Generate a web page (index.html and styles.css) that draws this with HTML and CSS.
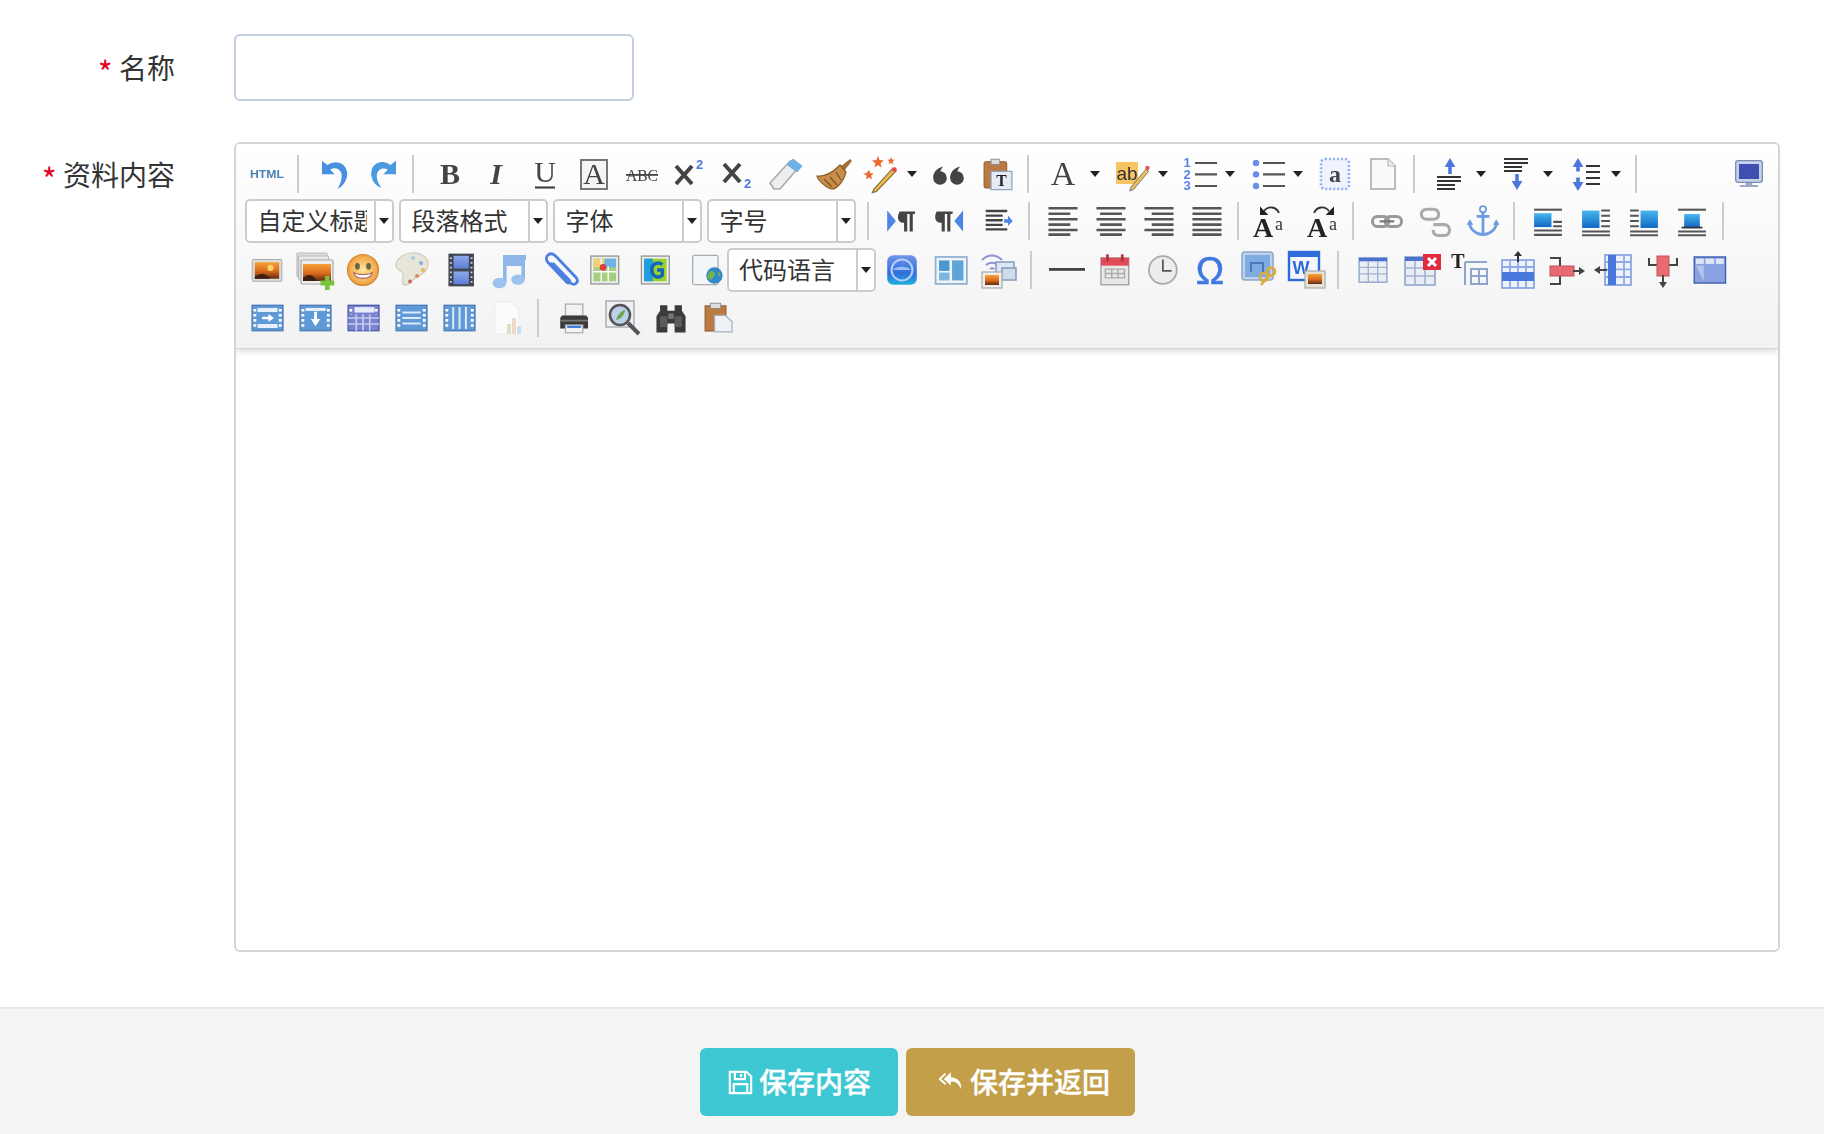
FILE: index.html
```html
<!DOCTYPE html>
<html lang="zh-CN">
<head>
<meta charset="utf-8">
<title>资料内容</title>
<link rel="stylesheet" href="styles.css">
</head>
<body>
<svg class="defs" aria-hidden="true">
<defs>
<linearGradient id="gSun" x1="0" y1="0" x2="0" y2="1"><stop offset="0" stop-color="#f7a23a"/><stop offset=".55" stop-color="#d9691c"/><stop offset="1" stop-color="#5a2a10"/></linearGradient>
<linearGradient id="gBlue" x1="0" y1="0" x2="0" y2="1"><stop offset="0" stop-color="#47b7ee"/><stop offset="1" stop-color="#1167c4"/></linearGradient>
<linearGradient id="gFilm" x1="0" y1="0" x2="0" y2="1"><stop offset="0" stop-color="#8fa8ea"/><stop offset="1" stop-color="#5c7fd6"/></linearGradient>
<radialGradient id="gFace"><stop offset="0" stop-color="#ffe9a0"/><stop offset="1" stop-color="#efa040"/></radialGradient>
<linearGradient id="gCyan" x1="0" y1="0" x2="0" y2="1"><stop offset="0" stop-color="#6f95e8"/><stop offset=".6" stop-color="#2f6fdc"/><stop offset="1" stop-color="#1fb0dc"/></linearGradient>

<symbol id="i-html" viewBox="0 0 20 20"><text x="10" y="12" class="t-html" textLength="17" lengthAdjust="spacingAndGlyphs">HTML</text></symbol>
<symbol id="i-undo" viewBox="0 0 20 20"><path d="M3.5 3.5v6.6h6.3L7.6 7.8c2.4-1.4 5-.4 5.6 2 .5 2.300-.4 5-1.900 7.700 3.300-1.700 5.300-5.300 4.700-8.700C15.300 4.600 10.500 2.500 6.200 5.500z" fill="#4a90e0"/></symbol>
<symbol id="i-redo" viewBox="0 0 20 20"><path d="M16.500 3.200v6.900h-6.300l2.200-2.300C10.200 6.500 7.600 7.500 7 10c-.5 2.300.6 4.900 2.200 6.900-3.300-1.100-5.700-4.700-5-8.300C5 4.300 9.600 2.500 13.800 5.500z" fill="#4a9ae0"/></symbol>
<symbol id="i-b" viewBox="0 0 20 20"><text x="10" y="15" class="t-serif t-bold">B</text></symbol>
<symbol id="i-i" viewBox="0 0 20 20"><text x="9" y="15" class="t-serif t-bold t-it">I</text></symbol>
<symbol id="i-u" viewBox="0 0 20 20"><text x="9.500" y="14" class="t-serif">U</text><rect x="4.500" y="16.200" width="10" height="1.100" fill="#444"/></symbol>
<symbol id="i-fa" viewBox="0 0 20 20"><rect x="3.500" y="3" width="13" height="14.500" fill="#f5f5f5" stroke="#777"/><text x="10" y="15" class="t-serif">A</text></symbol>
<symbol id="i-abc" viewBox="0 0 20 20"><text x="10" y="13.500" class="t-abc" textLength="16" lengthAdjust="spacingAndGlyphs">ABC</text><rect x="2" y="10" width="16" height=".9" fill="#444"/></symbol>
<symbol id="i-sup" viewBox="0 0 20 20"><path d="M3 6l8 9M11 6l-8 9" stroke="#444" stroke-width="2" fill="none"/><text x="13" y="7.500" class="t-idx">2</text></symbol>
<symbol id="i-sub" viewBox="0 0 20 20"><path d="M3 5l8 9M11 5l-8 9" stroke="#444" stroke-width="2" fill="none"/><text x="13" y="17" class="t-idx">2</text></symbol>
<symbol id="i-eraser" viewBox="0 0 20 20"><path d="M2 14.500L12 3.500l4 3.500L7 17.500H4z" fill="#eee" stroke="#aaa" stroke-width=".8"/><path d="M10.500 5.200L13.500 2.500l4.500 3.500-2.500 3z" fill="#69b2ea" stroke="#7fa8d0" stroke-width=".5"/></symbol>
<symbol id="i-brush" viewBox="0 0 20 20"><path d="M13 6.500L18 2.500l1 1-4 5z" fill="#a0703a"/><path d="M13 5.500l3 3.500c-1 5-5 8.500-7 8.500-2 0-7-4-7.500-6.500 3 .5 8-1.500 11.500-5.500z" fill="#c98f4a" stroke="#8a5a20" stroke-width=".6"/><path d="M5 12.500l4 4M8 11.500l3.500 4M11 9l2.500 4" stroke="#7d5020" stroke-width=".6"/></symbol>
<symbol id="i-wand" viewBox="0 0 20 20"><path d="M6 17.500l-.8 1.800 2-.6L17 8.500l-1.500-1.500z" fill="#f1bd4d" stroke="#8a7040" stroke-width=".6"/><circle cx="16.200" cy="7.800" r="1.200" fill="#e8494a"/><path d="M8 1l.8 2 2.200.2-1.700 1.400.5 2.200L8 5.600l-1.800 1.200.5-2.200L5 3.200 7.200 3zM14.500 1.500l.5 1.300 1.400.1-1.100.9.400 1.400-1.200-.8-1.200.8.400-1.400-1.100-.9 1.400-.1zM3.500 8l.7 1.600 1.700.2-1.300 1.100.4 1.700-1.500-.9-1.500.9.400-1.700L.5 9.800l1.700-.2z" fill="#ea6a30"/></symbol>
<symbol id="i-quote" viewBox="1 0 20 20"><circle cx="6" cy="12" r="3.400" fill="#444"/><path d="M2.600 12c0-3 2-5 5-5.700-1.200 1.300-1.700 2.700-1.700 4z" fill="#444"/><circle cx="14.500" cy="12" r="3.400" fill="#444"/><path d="M11.100 12c0-3 2-5 5-5.700-1.200 1.300-1.700 2.700-1.700 4z" fill="#444"/></symbol>
<symbol id="i-paste" viewBox="-1 -1.500 23 23"><rect x="2.500" y="3" width="13" height="15" rx="1" fill="#bb7a42" stroke="#8e5c34" stroke-width=".6"/><rect x="6.500" y="1.500" width="5" height="3" fill="#ddd" stroke="#888" stroke-width=".5"/><rect x="6.500" y="8.500" width="12" height="10.500" fill="#e6ecf6" stroke="#8fa0bf" stroke-width=".7"/><text x="12.500" y="17" class="t-tt">T</text></symbol>
<symbol id="i-fc" viewBox="0 0 20 20"><text x="9" y="15.500" class="t-serif t-a">A</text></symbol>
<symbol id="i-hl" viewBox="0 0 20 20"><rect x="1.500" y="4" width="11" height="11" fill="#f7c463"/><text x="7" y="13" class="t-ab">ab</text><path d="M9 16.500l-.6 2 1.900-.8 7.500-9-1.300-1.100z" fill="#eec05a" stroke="#777" stroke-width=".5"/><circle cx="17.200" cy="7" r="1.100" fill="#e25a5a"/></symbol>
<symbol id="i-ol" viewBox="0 0 20 20"><text x="3.500" y="6.500" class="t-num">1</text><text x="3.500" y="12.500" class="t-num">2</text><text x="3.500" y="18.200" class="t-num">3</text><path d="M7.500 4.500h11M7.500 10.200h11M7.500 16h11" stroke="#555" stroke-width="1.100"/></symbol>
<symbol id="i-ul" viewBox="0 0 20 20"><circle cx="4" cy="4.500" r="1.600" fill="#6a8fe6"/><circle cx="4" cy="10.200" r="1.600" fill="#6a8fe6"/><circle cx="4" cy="16" r="1.600" fill="#6a8fe6"/><path d="M7.500 4.500h11M7.500 10.200h11M7.500 16h11" stroke="#555" stroke-width="1.100"/></symbol>
<symbol id="i-dot" viewBox="0 0 20 20"><rect x="3" y="2.500" width="14" height="15" rx="2" fill="#eef3fd" stroke="#8fb0ee" stroke-width="1.300" stroke-dasharray="1 1"/><text x="10" y="14" class="t-dota">a</text></symbol>
<symbol id="i-page" viewBox="0 0 20 20"><path d="M4 2.500h8.500l3.500 3.500v11.500H4z" fill="#fafafa" stroke="#bbb"/><path d="M12.500 2.500V6H16" fill="#eee" stroke="#bbb" stroke-width=".6"/></symbol>
<symbol id="i-rt" viewBox="0 0 20 20"><path d="M9.500 2L6.800 6.500h1.800V10h1.800V6.500h1.800z" fill="#4c78dc"/><path d="M3 11.500h12M3 13.500h12M3 15.500h9M3 17.500h9" stroke="#333" stroke-width="1.100"/></symbol>
<symbol id="i-rb" viewBox="0 0 20 20"><path d="M3 2.500h12M3 4.500h12M3 6.500h9M3 8.500h9" stroke="#333" stroke-width="1.100"/><path d="M9.500 18L6.800 13.500h1.800V10h1.800v3.500h1.800z" fill="#4c78dc"/></symbol>
<symbol id="i-lh" viewBox="0 0 20 20"><path d="M6 2L3.300 6.500h1.800v2.300h1.800V6.500h1.800zM6 18.500L3.300 14h1.800v-2.300h1.800V14h1.800z" fill="#4c78dc"/><path d="M10 6h7M10 9h7M10 12h7M10 15h7" stroke="#333" stroke-width="1.100"/></symbol>
<symbol id="i-full" viewBox="-2 -2 24 24"><rect x="2" y="2" width="16" height="13" rx="1.500" fill="#c7d2ea" stroke="#7d8eb5" stroke-width=".8"/><rect x="4" y="4" width="12" height="9" fill="#3f4fb0"/><path d="M8 15.500h4v1H8zM4.500 16.800h11v.9h-11z" fill="#7d8eb5"/></symbol>

<symbol id="i-ltr" viewBox="-1 -1.500 23 23"><path d="M2 4l5 6-5 6z" fill="#4c85e6"/><path d="M9 4.500h9v1.500h-1.300v10h-1.800V6h-1.400v10h-1.800V11c-2.400 0-3.500-1.400-3.500-3.200S9.300 4.500 9 4.500z" fill="#444"/></symbol>
<symbol id="i-rtl" viewBox="-1 -1.500 23 23"><path d="M18 4l-5 6 5 6z" fill="#4c85e6"/><path d="M3 4.500h9v1.500h-1.300v10H8.900V6H7.500v10H5.700V11C3.300 11 2 9.600 2 7.800S2.700 4.500 3 4.500z" fill="#444"/></symbol>
<symbol id="i-ind" viewBox="-3 -3 26 26"><path d="M2 3.500h14M2 6.500h11M2 9.500h11M2 12.500h11M2 15.500h14" stroke="#444" stroke-width="1.500"/><path d="M14 8.800h2.500V6.500l3 3.500-3 3.300v-2.200H14z" fill="#4c85e6"/></symbol>
<symbol id="i-al" viewBox="-1 -1 22 22"><path d="M2 3.500h16M2 6.500h12M2 9.500h16M2 12.500h12M2 15.500h16M2 18h12" stroke="#555" stroke-width="1.400" transform="translate(0 -.5)"/></symbol>
<symbol id="i-ac" viewBox="-1 -1 22 22"><path d="M2 3.500h16M4 6.500h12M2 9.500h16M4 12.500h12M2 15.500h16M4 18h12" stroke="#555" stroke-width="1.400" transform="translate(0 -.5)"/></symbol>
<symbol id="i-ar" viewBox="-1 -1 22 22"><path d="M2 3.500h16M6 6.500h12M2 9.500h16M6 12.500h12M2 15.500h16M6 18h12" stroke="#555" stroke-width="1.400" transform="translate(0 -.5)"/></symbol>
<symbol id="i-aj" viewBox="-1 -1 22 22"><path d="M2 3.500h16M2 6.500h16M2 9.500h16M2 12.500h16M2 15.500h16M2 18h16" stroke="#555" stroke-width="1.400" transform="translate(0 -.5)"/></symbol>
<symbol id="i-up" viewBox="-1.500 0 20 20"><text x="6" y="18" class="t-aa">A</text><text x="14" y="14.500" class="t-aa2">a</text><path d="M14 6C12.500 2.500 8.500 2.500 6.500 5" stroke="#333" stroke-width=".9" fill="none"/><path d="M4.500 2.800v4.200h4.200z" fill="#222"/></symbol>
<symbol id="i-low" viewBox="-1.500 0 20 20"><text x="6" y="18" class="t-aa">A</text><text x="14" y="14.500" class="t-aa2">a</text><path d="M4.500 6C6 2.500 10 2.500 12 5" stroke="#333" stroke-width=".9" fill="none"/><path d="M14.500 2.800v4.200h-4.200z" fill="#222"/></symbol>
<symbol id="i-link" viewBox="-1 -1 22 22"><rect x="2" y="7.500" width="9" height="5.500" rx="2.700" fill="none" stroke="#999" stroke-width="1.600"/><rect x="9" y="7.500" width="9" height="5.500" rx="2.700" fill="none" stroke="#999" stroke-width="1.600"/><path d="M6 10.200h8" stroke="#777" stroke-width="1.200"/></symbol>
<symbol id="i-unlink" viewBox="-1 -1 22 22"><path d="M9 9H5.500C3.500 9 2.500 7.800 2.500 6.300S3.500 3.500 5.500 3.500H9c2 0 3 1.200 3 2.800 0 1.700-1 2.700-3 2.700M9 12h6c2 0 3 1.400 3 3s-1 3-3 3h-3c-2 0-3-1.200-3-3" fill="none" stroke="#aaa" stroke-width="1.700"/></symbol>
<symbol id="i-anchor" viewBox="-1 -1 22 22"><circle cx="10" cy="3.500" r="1.700" fill="none" stroke="#6c9be0" stroke-width="1"/><path d="M10 5v12.500M6.500 7.500h7M2.500 10.500c0 4 4 7 7.500 7s7.500-3 7.500-7" fill="none" stroke="#6c9be0" stroke-width="1.500"/><path d="M1 12l1.800-3 1.800 3zM15.500 12l1.800-3 1.800 3z" fill="#6c9be0"/></symbol>
<symbol id="i-il" viewBox="-1.500 -1.500 23 23"><path d="M2 3.500h16" stroke="#555" stroke-width="1.200"/><rect x="2" y="5.500" width="10" height="8" fill="url(#gBlue)"/><path d="M13 10.500h5M13 13h5M2 15.500h16M2 18h16" stroke="#555" stroke-width="1.200"/></symbol>
<symbol id="i-ir" viewBox="-1.500 -1.500 23 23"><rect x="2" y="4" width="10" height="10" fill="url(#gBlue)"/><path d="M13 4h5M13 7h5M13 10h5M13 13h5M2 16h16M2 18.200h16" stroke="#555" stroke-width="1.200"/></symbol>
<symbol id="i-in" viewBox="-1.500 -1.500 23 23"><rect x="8" y="4" width="10" height="10" fill="url(#gBlue)"/><path d="M2 4h5M2 7h5M2 10h5M2 13h5M2 16h16M2 18.200h16" stroke="#555" stroke-width="1.200"/></symbol>
<symbol id="i-ic" viewBox="-1.500 -1.500 23 23"><path d="M2 3.500h16" stroke="#555" stroke-width="1.200"/><rect x="5.500" y="6" width="9" height="7.500" fill="url(#gBlue)"/><path d="M4 13.800h12" stroke="#333" stroke-width="1"/><path d="M2 16h16M2 18.200h16" stroke="#555" stroke-width="1.200"/></symbol>

<symbol id="i-img" viewBox="-1.500 -1.500 23 23"><rect x="1.500" y="4" width="17" height="12.500" rx=".8" fill="#ddd" stroke="#aaa" stroke-width=".6"/><rect x="3" y="5.500" width="14" height="9.500" fill="url(#gSun)"/><circle cx="12" cy="8.800" r="1.800" fill="#fad26a"/><path d="M3 14c3-2.500 6-2.500 9 1H3z" fill="#3d2010"/></symbol>
<symbol id="i-imgs" viewBox="0 0 20 20"><rect x="1" y="1.500" width="15" height="12" rx=".6" fill="#ddd" stroke="#bbb" stroke-width=".6"/><rect x="1.800" y="3" width="15" height="12" rx=".6" fill="#e8e8e8" stroke="#bbb" stroke-width=".6"/><rect x="3" y="5" width="16" height="12" rx=".6" fill="#eee" stroke="#aaa" stroke-width=".6"/><rect x="4" y="7" width="14" height="8.500" fill="url(#gSun)"/><path d="M4 14c3-2.500 5-2 7 1.500H4z" fill="#3d2010"/><path d="M15 13h2.300v2.300h2.300v2.400h-2.300V20H15v-2.300h-2.300v-2.400H15z" fill="#7cc13a"/></symbol>
<symbol id="i-emo" viewBox="-.8 -.8 21.600 21.600"><circle cx="10" cy="10" r="8.300" fill="url(#gFace)" stroke="#d98c35" stroke-width=".8"/><ellipse cx="7" cy="8" rx="1.300" ry="1.800" fill="#664"/><ellipse cx="13" cy="8" rx="1.300" ry="1.800" fill="#664"/><path d="M5 11.500c2 1.200 8 1.200 10 0-1 4-9 4-10 0z" fill="#fff" stroke="#a66" stroke-width=".6"/></symbol>
<symbol id="i-pal" viewBox="0 0 20 20"><path d="M3 9c-2-3 2-7 7-7.500 5-.5 9 2.500 8.500 6-.5 4-4 5-7 7-1.500 1-2 3-4 3s-2-2-1.500-4C6.500 10.500 4.500 11 3 9z" fill="#e7e4da" stroke="#cfcbbd" stroke-width=".6"/><circle cx="15" cy="6.500" r="1" fill="#7cb2e6"/><circle cx="16" cy="10" r="1" fill="#e8b94c"/><circle cx="13" cy="13" r="1" fill="#d98860"/><circle cx="9.500" cy="15.800" r="1" fill="#c96a5a"/><circle cx="11" cy="4" r="1" fill="#a9cbe8"/></symbol>
<symbol id="i-film" viewBox="-2.200 -1 22 22"><rect x="3" y="1" width="14" height="18" fill="#3f4652"/><rect x="5.800" y="2.200" width="8.400" height="7" fill="url(#gFilm)"/><rect x="5.800" y="10.800" width="8.400" height="7" fill="url(#gFilm)"/><path d="M4.300 3v14M15.700 3v14" stroke="#cfd6e0" stroke-width="1" stroke-dasharray="1 1.600"/></symbol>
<symbol id="i-mus" viewBox="-1 0 20 20"><path d="M7 4h11v10.500h-1.800V8H8.800v8.500H7z" fill="#8fb6e8"/><path d="M7 2.500h11.500V5H7z" fill="#8fb6e8"/><ellipse cx="5.200" cy="16.500" rx="3.400" ry="2.600" fill="#9cc2ee"/><ellipse cx="14.500" cy="14.800" rx="3.400" ry="2.600" fill="#9cc2ee"/></symbol>
<symbol id="i-clip" viewBox="-2.800 0 20 20"><path d="M5 6.500l10 10c2.500 2 4.500-1 2.500-3L7.500 3C5 .5 1.500 3 3.500 6l9.500 10c1 1 2 .2 1.300-1L6 6.500" fill="none" stroke="#4c7fe0" stroke-width="1.400"/></symbol>
<symbol id="i-map" viewBox="-2.500 -1.500 23 23"><rect x="2" y="2" width="16" height="16" fill="#eee" stroke="#999" stroke-width=".8"/><rect x="3.500" y="3.500" width="13" height="13" fill="#a5cf80"/><path d="M3.500 3.500h6v5h-6z" fill="#f0d27a"/><path d="M10 3.500h6.500v5H10z" fill="#6fb4e6"/><path d="M8 3.500v13M3.500 11h13M12 8v8.500" stroke="#fff" stroke-width=".8"/><circle cx="9" cy="8.500" r="1.900" fill="#e03c3c"/></symbol>
<symbol id="i-gmap" viewBox="-4 -1.500 23 23"><rect x="2" y="2" width="16" height="16" fill="#eee" stroke="#999" stroke-width=".8"/><rect x="3.500" y="3.500" width="13" height="13" fill="#9ad22c"/><path d="M3.500 3.500h5v13h-5z" fill="#1f9fe0"/><path d="M14 7c-2-2-6-1-6 3s4 5 6 3v-3h-3" fill="none" stroke="#1565b8" stroke-width="2"/></symbol>
<symbol id="i-web" viewBox="-5.500 -1 22 22"><rect x="2" y="2" width="14" height="16" rx="1" fill="#f2f5fa" stroke="#aaa" stroke-width=".7"/><circle cx="14" cy="13" r="4.500" fill="#2f88c9"/><path d="M12 10.500c1.500 0 3 1 2 2.500s-1.500 3-3 2-1-3 1-4.500zM16 10.500l1.500 2-1.500 1z" fill="#73b54a"/></symbol>
<symbol id="i-gad" viewBox="-1.500 -1.500 23 23"><rect x="1.500" y="1.500" width="17" height="17" rx="3.500" fill="url(#gCyan)"/><ellipse cx="10" cy="10" rx="6" ry="6" fill="none" stroke="#b9cff5" stroke-width="1.200"/><path d="M5 10c1.500-2.500 8.500-2.500 10 0" fill="#9cc0f2"/></symbol>
<symbol id="i-tpl" viewBox="-2.200 -1.500 23 23"><rect x="1" y="2.500" width="18" height="15.500" fill="#eef3f8" stroke="#8fb0cf"/><rect x="3" y="4.500" width="6" height="6" fill="#4b97d2"/><rect x="3" y="11.500" width="6" height="4.500" fill="#7cb5df"/><rect x="10.500" y="4.500" width="6.500" height="11.500" fill="#5ea4d8"/></symbol>
<symbol id="i-bg" viewBox="0 0 20 20"><path d="M2 5C5 2 9 2 12 5M4 7.500c2-1.500 4-1.500 6 0M6 9.500c.7-.5 1.500-.5 2.200 0" fill="none" stroke="#8e90d8" stroke-width="1"/><rect x="9" y="6" width="9" height="8" fill="#dde6f2" stroke="#8aa0c0" stroke-width=".8"/><rect x="12" y="9" width="7" height="6" fill="#cfdcee" stroke="#8aa0c0" stroke-width=".8"/><rect x="2" y="11" width="10" height="8" fill="#eee" stroke="#aaa" stroke-width=".6"/><rect x="3.500" y="12.500" width="7" height="5" fill="url(#gSun)"/></symbol>
<symbol id="i-hr" viewBox="-.5 0 20 20"><rect x="1" y="9" width="18" height="1.400" fill="#444"/></symbol>
<symbol id="i-cal" viewBox="-2 -1.500 23 23"><rect x="2" y="3" width="16" height="15.500" fill="#e8e8e8" stroke="#999" stroke-width=".7"/><rect x="2" y="3" width="16" height="4.500" fill="#e24a5a"/><rect x="5" y="1" width="1.500" height="4" fill="#a33"/><rect x="13.500" y="1" width="1.500" height="4" fill="#a33"/><path d="M4.500 9.500h11v5h-11zM8.200 9.500v5M11.800 9.500v5M4.500 12h11" fill="none" stroke="#aaa" stroke-width=".8"/></symbol>
<symbol id="i-clk" viewBox="-2 -1.500 23 23"><circle cx="10" cy="10" r="8" fill="#ececec" stroke="#aaa" stroke-width="1"/><path d="M10 4v6.500h5" fill="none" stroke="#555" stroke-width="1"/></symbol>
<symbol id="i-om" viewBox="0 0 20 20"><text x="10" y="17" class="t-om">Ω</text></symbol>
<symbol id="i-scr" viewBox="-.5 0 20 20"><rect x="1.500" y="1" width="15.500" height="14" rx="1.500" fill="#bfd2ee" stroke="#8fa8cc" stroke-width=".8"/><rect x="3" y="2.500" width="12.500" height="11" fill="#7fabe0"/><path d="M6 11V6.500h6V11" fill="none" stroke="#4a78b8" stroke-width="1"/><circle cx="12.500" cy="13.500" r="2" fill="none" stroke="#d9ac42" stroke-width="1.300"/><circle cx="16" cy="10.800" r="2" fill="none" stroke="#d9ac42" stroke-width="1.300"/><path d="M11 17.500l4-5" stroke="#d9ac42" stroke-width="1.300"/></symbol>
<symbol id="i-wrd" viewBox="-.5 0 20 20"><rect x="1" y="1" width="15" height="14" fill="#f4f7fd" stroke="#2f6bd6" stroke-width="1.200"/><rect x="1" y="1" width="15" height="2.500" fill="#2f6bd6"/><text x="7" y="12" class="t-w">W</text><rect x="9" y="10.500" width="10" height="8.500" fill="#e6e2d6" stroke="#aaa" stroke-width=".6"/><rect x="10.500" y="12" width="7" height="5" fill="url(#gSun)"/></symbol>
<symbol id="i-tb" viewBox="-2 -1.500 23 23"><rect x="1.500" y="3" width="16" height="14" fill="#e8edf6" stroke="#8ea5cf" stroke-width=".8"/><rect x="1.500" y="3" width="16" height="2" fill="#4c72cf"/><path d="M1.500 8.500h16M1.500 12.200h16M6.800 5v12M12.200 5v12" stroke="#a2b1cc" stroke-width=".8"/></symbol>
<symbol id="i-tbd" viewBox="-1 0 20 20"><rect x="1" y="3.500" width="15" height="14" fill="#e8edf6" stroke="#8ea5cf" stroke-width=".8"/><rect x="1" y="3.500" width="15" height="2" fill="#4c72cf"/><path d="M1 9h15M1 13h15M6 5.500v12M11 5.500v12" stroke="#a2b1cc" stroke-width=".8"/><rect x="10" y="2" width="9" height="8" fill="#e22b3f"/><path d="M12.500 4l4 4M16.500 4l-4 4" stroke="#fff" stroke-width="1.500"/></symbol>
<symbol id="i-ttl" viewBox="0 0 20 20"><text x="4.500" y="9" class="t-ttl">T</text><path d="M8 6h11M8 6v11.500M11 9.500h8v7.500h-8zM11 13h8M15 9.500v7.500" fill="none" stroke="#8ea5cf" stroke-width="1"/></symbol>
<symbol id="i-trow" viewBox="-.5 0 20 20"><rect x="2" y="5" width="16" height="14" fill="#eef2fb" stroke="#7f9be0" stroke-width=".8"/><path d="M2 8.500h16M6 5v14M10 5v14M14 5v14" stroke="#93aae6" stroke-width=".9"/><rect x="2" y="11" width="16" height="4.500" fill="#4878dc"/><path d="M10 .5L8 3h1.500v3h1V3H12z" fill="#333"/></symbol>
<symbol id="i-tmg" viewBox="-1 0 20 20"><path d="M1.500 4h5v4M1.500 17h5v-4" fill="none" stroke="#444" stroke-width="1"/><rect x="1.500" y="8" width="12" height="5" fill="#ea6a72" stroke="#c05058" stroke-width=".5"/><path d="M13 10.500h4" stroke="#444" stroke-width="1"/><path d="M16 8.500l3 2-3 2z" fill="#444"/></symbol>
<symbol id="i-tcol" viewBox="0 0 20 20"><rect x="6" y="2.500" width="13" height="15" fill="#eef2fb" stroke="#7f9be0" stroke-width=".8"/><path d="M6 6h13M6 9.700h13M6 13.500h13M15.500 2.500v15" stroke="#93aae6" stroke-width=".9"/><rect x="7.500" y="2.500" width="4" height="15" fill="#4878dc"/><path d="M1 10h6" stroke="#444" stroke-width="1"/><path d="M3.500 8L.5 10l3 2z" fill="#444"/></symbol>
<symbol id="i-tsp" viewBox="-1 0 20 20"><path d="M3 4v3.500h4M17 4v3.500h-4" fill="none" stroke="#444" stroke-width="1"/><rect x="7" y="3" width="6" height="10" fill="#ea6a72" stroke="#c05058" stroke-width=".5"/><path d="M10 12.500v4" stroke="#444" stroke-width="1"/><path d="M8 16l2 3 2-3z" fill="#444"/></symbol>
<symbol id="i-tprop" viewBox="-2 -1.500 23 23"><rect x="1" y="2.500" width="18" height="15" fill="#8aa2e2" stroke="#3f5fb0" stroke-width=".8"/><rect x="2" y="3.500" width="4.500" height="3" fill="#dfe7f7"/><rect x="7.500" y="3.500" width="5" height="3" fill="#dfe7f7"/><rect x="13.500" y="3.500" width="4.500" height="3" fill="#dfe7f7"/><path d="M2 7.500h4.500v9" fill="#b6c6ea"/></symbol>
<symbol id="i-tf1" viewBox="-1.300 -1 22 22"><rect x="1.500" y="3" width="17" height="14" fill="#5f99d6" stroke="#4879b8" stroke-width=".7"/><path d="M3 5v10M17 5v10" stroke="#fff" stroke-width="1.600" stroke-dasharray="1.400 1.400"/><rect x="4.500" y="4.500" width="11" height="2.200" fill="#e8f1fb"/><rect x="4.500" y="13.300" width="11" height="2.200" fill="#e8f1fb"/><path d="M7 9.300h3.500V7.800l3 2.200-3 2.200v-1.500H7z" fill="#fff"/></symbol>
<symbol id="i-tf2" viewBox="-1.300 -1 22 22"><rect x="1.500" y="3" width="17" height="14" fill="#5f99d6" stroke="#4879b8" stroke-width=".7"/><path d="M3 5v10M17 5v10" stroke="#fff" stroke-width="1.600" stroke-dasharray="1.400 1.400"/><rect x="4.500" y="4.500" width="11" height="1.600" fill="#e8f1fb"/><path d="M9.200 6.500h1.600v4h1.800L10 14.500l-2.600-4h1.800z" fill="#fff"/></symbol>
<symbol id="i-tf3" viewBox="-1.300 -1 22 22"><rect x="1.500" y="3" width="17" height="14" fill="#7883cf" stroke="#4c58a8" stroke-width=".7"/><path d="M3 5v3M17 5v3" stroke="#fff" stroke-width="1.600" stroke-dasharray="1.400 1.400"/><rect x="5" y="4" width="11" height="3" fill="#e8ecfa"/><path d="M1.500 10h17M1.500 13.300h17M6 8v9M9.700 8v9M13.400 8v9" stroke="#c6cdef" stroke-width=".9"/></symbol>
<symbol id="i-tf4" viewBox="-1.300 -1 22 22"><rect x="1.500" y="3" width="17" height="14" fill="#5f99d6" stroke="#4879b8" stroke-width=".7"/><path d="M3 5v10M17 5v10" stroke="#fff" stroke-width="1.600" stroke-dasharray="1.400 1.400"/><path d="M5 7h10M5 10h10M5 13h10" stroke="#dfeafb" stroke-width="1.100"/></symbol>
<symbol id="i-tf5" viewBox="-1.300 -1 22 22"><rect x="1.500" y="3" width="17" height="14" fill="#5f99d6" stroke="#4879b8" stroke-width=".7"/><path d="M3 5v10M17 5v10" stroke="#fff" stroke-width="1.600" stroke-dasharray="1.400 1.400"/><path d="M6.500 4v12M10 4v12M13.500 4v12" stroke="#dfeafb" stroke-width="1.100"/></symbol>
<symbol id="i-chart" viewBox="0 0 20 20"><path d="M4 2h8l4 4v12H4z" fill="#fbfbfb" stroke="#eee" stroke-width=".6"/><rect x="10" y="13" width="2" height="5" fill="#d8e2c4"/><rect x="12.500" y="10" width="2" height="8" fill="#efd8c8"/><rect x="15" y="14" width="2" height="4" fill="#c8def0"/></symbol>
<symbol id="i-print" viewBox="-1 -1.500 23 23"><rect x="5" y="2" width="10" height="7" fill="#f2f2f2" stroke="#aaa" stroke-width=".7"/><path d="M3 8.500h14l1 1.500v6H2v-6z" fill="#3a3a3a"/><rect x="2" y="11" width="16" height="1" fill="#777"/><rect x="5" y="14" width="10" height="4.500" fill="#f2f2f2" stroke="#aaa" stroke-width=".7"/><rect x="6" y="14.500" width="8" height="1.200" fill="#3a78dc"/></symbol>
<symbol id="i-prev" viewBox="0 0 20 20"><rect x="1.500" y="1.500" width="14" height="13" fill="#eef0f4" stroke="#a8a8b0" stroke-width=".7"/><circle cx="8.500" cy="8.500" r="5" fill="#bcd0ea" stroke="#555" stroke-width="1.300"/><path d="M6.500 11c1-3 2.500-4.500 4.500-5-.2 2.500-2 4.500-4.500 5z" fill="#6aa84a"/><path d="M12.500 12.500l5.500 5.500" stroke="#555" stroke-width="2"/></symbol>
<symbol id="i-find" viewBox="-1 -1 22 22"><path d="M4 3h4v3h4V3h4v3l2 3v9h-6v-5H8v5H2V9l2-3z" fill="#3a3a3a"/><path d="M4 9h4v6H4zM12 9h4v6h-4z" fill="#5c5c5c"/><rect x="8.500" y="7.500" width="3" height="3" fill="#777"/></symbol>
<symbol id="i-psw" viewBox="-1 -1.500 23 23"><rect x="2.500" y="3" width="12" height="14.500" fill="#bb7a42" stroke="#8e5c34" stroke-width=".6"/><rect x="5.500" y="1.500" width="6" height="3" fill="#ddd" stroke="#888" stroke-width=".5"/><path d="M8 8.500h6l4 3.500v6H8z" fill="#eef1f6" stroke="#a8afbc" stroke-width=".7"/></symbol>
<symbol id="i-disk" viewBox="0 0 24 24"><path d="M2.500 2.500h14.800l4.200 4.200v14.800h-19z" fill="none" stroke="#fff" stroke-width="1.900"/><path d="M7 2.500v6.500h9V2.500M12.500 4.500v2.500M6 21.500v-8h12v8" fill="none" stroke="#fff" stroke-width="1.900"/></symbol>
<symbol id="i-back" viewBox="0 0 30 24"><path d="M8 2.500L1.500 8.500 8 14.500" fill="none" stroke="#fff" stroke-width="2.200"/><path d="M14 1L6 8.500l8 7.500v-4.500c5 0 9 2 11 8.500 2-7-2-12.500-11-13.500z" fill="#fff"/></symbol>
</defs>
</svg>

<main class="form">
  <div class="field">
    <label class="label"><span class="req">*</span> 名称</label>
    <input class="input" type="text">
  </div>
  <div class="field field-editor">
    <label class="label"><span class="req">*</span> 资料内容</label>
    <div class="editor">
      <div class="toolbar">
        <div class="row">
          <span class="b"><svg class="ic"><use href="#i-html"/></svg></span><i class="sep"></i>
          <span class="b"><svg class="ic"><use href="#i-undo"/></svg></span>
          <span class="b"><svg class="ic"><use href="#i-redo"/></svg></span><i class="sep"></i>
          <span class="b"><svg class="ic"><use href="#i-b"/></svg></span>
          <span class="b"><svg class="ic"><use href="#i-i"/></svg></span>
          <span class="b"><svg class="ic"><use href="#i-u"/></svg></span>
          <span class="b"><svg class="ic"><use href="#i-fa"/></svg></span>
          <span class="b"><svg class="ic"><use href="#i-abc"/></svg></span>
          <span class="b"><svg class="ic"><use href="#i-sup"/></svg></span>
          <span class="b"><svg class="ic"><use href="#i-sub"/></svg></span>
          <span class="b"><svg class="ic"><use href="#i-eraser"/></svg></span>
          <span class="b"><svg class="ic"><use href="#i-brush"/></svg></span>
          <span class="b"><svg class="ic"><use href="#i-wand"/></svg></span><i class="caret"></i>
          <span class="b"><svg class="ic"><use href="#i-quote"/></svg></span>
          <span class="b"><svg class="ic"><use href="#i-paste"/></svg></span><i class="sep"></i>
          <span class="b"><svg class="ic"><use href="#i-fc"/></svg></span><i class="caret"></i>
          <span class="b"><svg class="ic"><use href="#i-hl"/></svg></span><i class="caret"></i>
          <span class="b"><svg class="ic"><use href="#i-ol"/></svg></span><i class="caret"></i>
          <span class="b"><svg class="ic"><use href="#i-ul"/></svg></span><i class="caret"></i>
          <span class="b"><svg class="ic"><use href="#i-dot"/></svg></span>
          <span class="b"><svg class="ic"><use href="#i-page"/></svg></span><i class="sep"></i>
          <span class="b"><svg class="ic"><use href="#i-rt"/></svg></span><i class="caret"></i>
          <span class="b"><svg class="ic"><use href="#i-rb"/></svg></span><i class="caret"></i>
          <span class="b"><svg class="ic"><use href="#i-lh"/></svg></span><i class="caret"></i><i class="sep"></i>
          <span class="b push"><svg class="ic"><use href="#i-full"/></svg></span>
        </div>
        <div class="row">
          <span class="sel first"><span class="sel-text">自定义标题</span><span class="sel-arrow"><i class="caret-s"></i></span></span>
          <span class="sel"><span class="sel-text">段落格式</span><span class="sel-arrow"><i class="caret-s"></i></span></span>
          <span class="sel"><span class="sel-text">字体</span><span class="sel-arrow"><i class="caret-s"></i></span></span>
          <span class="sel"><span class="sel-text">字号</span><span class="sel-arrow"><i class="caret-s"></i></span></span><i class="sep tight"></i>
          <span class="b"><svg class="ic"><use href="#i-ltr"/></svg></span>
          <span class="b"><svg class="ic"><use href="#i-rtl"/></svg></span>
          <span class="b"><svg class="ic"><use href="#i-ind"/></svg></span><i class="sep tight"></i>
          <span class="b"><svg class="ic"><use href="#i-al"/></svg></span>
          <span class="b"><svg class="ic"><use href="#i-ac"/></svg></span>
          <span class="b"><svg class="ic"><use href="#i-ar"/></svg></span>
          <span class="b"><svg class="ic"><use href="#i-aj"/></svg></span><i class="sep tight"></i>
          <span class="b case-up"><svg class="ic"><use href="#i-up"/></svg></span>
          <span class="b"><svg class="ic"><use href="#i-low"/></svg></span><i class="sep tight"></i>
          <span class="b"><svg class="ic"><use href="#i-link"/></svg></span>
          <span class="b"><svg class="ic"><use href="#i-unlink"/></svg></span>
          <span class="b"><svg class="ic"><use href="#i-anchor"/></svg></span><i class="sep tight"></i>
          <span class="b"><svg class="ic"><use href="#i-il"/></svg></span>
          <span class="b"><svg class="ic"><use href="#i-ir"/></svg></span>
          <span class="b"><svg class="ic"><use href="#i-in"/></svg></span>
          <span class="b"><svg class="ic"><use href="#i-ic"/></svg></span><i class="sep tight"></i>
        </div>
        <div class="row">
          <span class="b"><svg class="ic"><use href="#i-img"/></svg></span>
          <span class="b"><svg class="ic"><use href="#i-imgs"/></svg></span>
          <span class="b"><svg class="ic"><use href="#i-emo"/></svg></span>
          <span class="b"><svg class="ic"><use href="#i-pal"/></svg></span>
          <span class="b"><svg class="ic"><use href="#i-film"/></svg></span>
          <span class="b"><svg class="ic"><use href="#i-mus"/></svg></span>
          <span class="b"><svg class="ic"><use href="#i-clip"/></svg></span>
          <span class="b"><svg class="ic"><use href="#i-map"/></svg></span>
          <span class="b"><svg class="ic"><use href="#i-gmap"/></svg></span>
          <span class="b"><svg class="ic"><use href="#i-web"/></svg></span>
          <span class="sel code"><span class="sel-text">代码语言</span><span class="sel-arrow"><i class="caret-s"></i></span></span>
          <span class="b"><svg class="ic"><use href="#i-gad"/></svg></span>
          <span class="b"><svg class="ic"><use href="#i-tpl"/></svg></span>
          <span class="b"><svg class="ic"><use href="#i-bg"/></svg></span><i class="sep wide"></i>
          <span class="b"><svg class="ic"><use href="#i-hr"/></svg></span>
          <span class="b"><svg class="ic"><use href="#i-cal"/></svg></span>
          <span class="b"><svg class="ic"><use href="#i-clk"/></svg></span>
          <span class="b"><svg class="ic"><use href="#i-om"/></svg></span>
          <span class="b"><svg class="ic"><use href="#i-scr"/></svg></span>
          <span class="b"><svg class="ic"><use href="#i-wrd"/></svg></span><i class="sep wide"></i>
          <span class="b"><svg class="ic"><use href="#i-tb"/></svg></span>
          <span class="b"><svg class="ic"><use href="#i-tbd"/></svg></span>
          <span class="b"><svg class="ic"><use href="#i-ttl"/></svg></span>
          <span class="b"><svg class="ic"><use href="#i-trow"/></svg></span>
          <span class="b"><svg class="ic"><use href="#i-tmg"/></svg></span>
          <span class="b"><svg class="ic"><use href="#i-tcol"/></svg></span>
          <span class="b"><svg class="ic"><use href="#i-tsp"/></svg></span>
          <span class="b"><svg class="ic"><use href="#i-tprop"/></svg></span>
        </div>
        <div class="row">
          <span class="b"><svg class="ic"><use href="#i-tf1"/></svg></span>
          <span class="b"><svg class="ic"><use href="#i-tf2"/></svg></span>
          <span class="b"><svg class="ic"><use href="#i-tf3"/></svg></span>
          <span class="b"><svg class="ic"><use href="#i-tf4"/></svg></span>
          <span class="b"><svg class="ic"><use href="#i-tf5"/></svg></span>
          <span class="b"><svg class="ic"><use href="#i-chart"/></svg></span><i class="sep"></i>
          <span class="b"><svg class="ic"><use href="#i-print"/></svg></span>
          <span class="b"><svg class="ic"><use href="#i-prev"/></svg></span>
          <span class="b"><svg class="ic"><use href="#i-find"/></svg></span>
          <span class="b"><svg class="ic"><use href="#i-psw"/></svg></span>
        </div>
      </div>
      <div class="body"></div>
    </div>
  </div>
</main>
<footer class="footer">
  <button class="btn btn-save" type="button"><svg class="btn-ic"><use href="#i-disk"/></svg>保存内容</button>
  <button class="btn btn-back" type="button"><svg class="btn-ic wide"><use href="#i-back"/></svg>保存并返回</button>
</footer>
</body>
</html>
```

FILE: styles.css
```css
* { box-sizing: border-box; }
html, body { margin: 0; height: 100%; }
body {
  background: #fff;
  color: #333;
  font-family: "Noto Sans CJK SC", "Liberation Sans", sans-serif;
  display: flex;
  flex-direction: column;
  min-height: 1134px;
  overflow: hidden;
}
.defs { position: absolute; width: 0; height: 0; }
symbol { overflow: visible; }
.form { padding-top: 34px; flex: 0 0 1007px; }
.field { display: flex; align-items: center; margin-bottom: 41px; }
.field-editor { align-items: flex-start; margin-bottom: 0; }
.label {
  width: 175px;
  margin-right: 59px;
  text-align: right;
  font-size: 28px;
  line-height: 40px;
  flex: none;
  color: #333;
  padding-bottom: 2px;
}
.field-editor .label { padding-top: 12px; }
.req { color: #e60023; font-size: 32px; line-height: 28px; vertical-align: -6px; }
.input {
  width: 400px;
  height: 67px;
  border: 2px solid #c2cfe0;
  border-radius: 6px;
  background: #fff;
  outline: 0;
}
.editor {
  width: 1546px;
  height: 810px;
  border: 2px solid #d4d4d4;
  border-radius: 6px;
  background: #fff;
  display: flex;
  flex-direction: column;
  overflow: hidden;
}
.toolbar {
  height: 205px;
  padding: 6px 5px 0 7px;
  background: linear-gradient(#fff, #f2f2f2);
  border-bottom: 1px solid #d4d4d4;
  box-shadow: 0 2px 7px rgba(0, 0, 0, .16);
  position: relative;
}
.row { display: flex; align-items: center; height: 48.3px; }
.row:first-child { height: 47.3px; }
.b { flex: 0 0 48px; height: 48px; display: flex; align-items: center; justify-content: center; }
.case-up { flex-basis: 50px; justify-content: flex-start; }
.push { margin-left: auto; }
.ic { width: 40px; height: 40px; display: block; filter: blur(.55px); overflow: visible; }
.sep { flex: 0 0 19.500px; height: 38px; display: flex; padding-left: 5.500px; }
.sep::before { content: ""; width: 2px; height: 38px; background: #ccc; }
.tight { flex-basis: 17px; padding-left: 6.500px; }
.wide { padding-left: 7.500px; }
.caret { flex: 0 0 19.500px; height: 6px; display: flex; justify-content: center; margin-left: -3.500px; margin-right: 3.500px; }
.caret::before, .caret-s {
  content: "";
  width: 0;
  height: 0;
  border-left: 5px solid transparent;
  border-right: 5px solid transparent;
  border-top: 6px solid #222;
}
.sel {
  flex: 0 0 149px;
  min-width: 0;
  height: 44px;
  margin-right: 5px;
  background: #fff;
  border: 2px solid #ccc;
  border-radius: 5px;
  display: flex;
  font-size: 24px;
  line-height: 38px;
  color: #333;
}
.first { margin-left: 1.500px; }
.sel-text { flex: 1; min-width: 0; margin-right: 7px; padding-left: 11px; overflow: hidden; white-space: nowrap; }
.sel-arrow { flex: 0 0 18px; border-left: 2px solid #ccc; display: flex; align-items: center; justify-content: center; }
.code { margin-left: 4px; margin-right: 2px; flex-basis: 149px; }
.code .sel-text { padding-left: 10px; }
.body { flex: 1; background: #fff; }
.footer {
  flex: 1;
  background: #f4f4f5;
  border-top: 2px solid #e9e9ea;
  display: flex;
  justify-content: center;
  align-items: flex-start;
  gap: 8px;
  padding: 39px 0 0 11px;
}
.btn {
  height: 68px;
  border: 0;
  border-radius: 6px;
  color: #fff;
  font-family: inherit;
  font-size: 28px;
  line-height: 38px;
  font-weight: 500;
  -webkit-text-stroke: .35px #fff;
  display: flex;
  align-items: center;
  justify-content: center;
  gap: 5px;
  padding: 0 0 2px;
}
.btn-save { width: 198px; background: #3dc7d3; }
.btn-back { width: 229px; background: #c29f48; }
.btn-ic { width: 27px; height: 27px; margin-top: 2px; }
.btn-ic.wide { width: 34px; height: 28px; }

.t-html { font: bold 5.600px "Liberation Sans", sans-serif; fill: #4a80b4; text-anchor: middle; }
.t-serif { font: 15px "Liberation Serif", serif; fill: #444; text-anchor: middle; }
.t-bold { font-weight: bold; }
.t-it { font-style: italic; }
.t-a { font-size: 17px; }
.t-abc { font: 8px "Liberation Serif", serif; fill: #444; text-anchor: middle; }
.t-idx { font: bold 6.500px "Liberation Sans", sans-serif; fill: #4c78dc; }
.t-tt { font: bold 9px "Liberation Serif", serif; fill: #222; text-anchor: middle; }
.t-ab { font: 9.500px "Liberation Sans", sans-serif; fill: #333; text-anchor: middle; }
.t-num { font: bold 6.500px "Liberation Sans", sans-serif; fill: #5c82e6; text-anchor: middle; }
.t-dota { font: bold 12px "Liberation Serif", serif; fill: #444; text-anchor: middle; }
.t-aa { font: bold 14px "Liberation Serif", serif; fill: #222; text-anchor: middle; }
.t-aa2 { font: 9px "Liberation Serif", serif; fill: #333; text-anchor: middle; }
.t-om { font: 19px "Liberation Sans", sans-serif; fill: #3f78e0; stroke: #3f78e0; stroke-width: .3px; text-anchor: middle; }
.t-w { font: bold 9px "Liberation Sans", sans-serif; fill: #2f6bd6; text-anchor: middle; }
.t-ttl { font: bold 10px "Liberation Serif", serif; fill: #222; text-anchor: middle; }
```
